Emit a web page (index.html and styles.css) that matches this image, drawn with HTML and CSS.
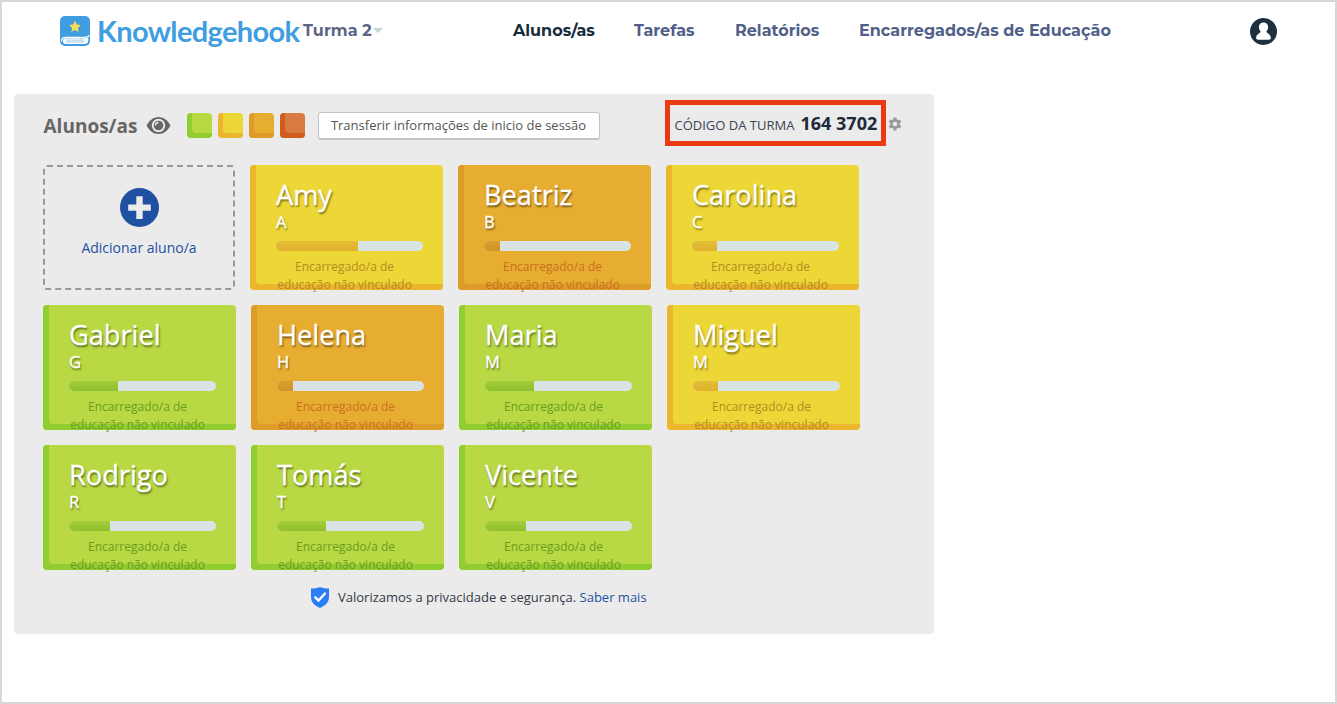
FILE: index.html
```html
<!DOCTYPE html>
<html lang="pt">
<head>
    <meta charset="UTF-8">
    <meta name="viewport" content="width=device-width, initial-scale=1.0">
    <title>Knowledgehook</title>
    <link rel="stylesheet" href="styles.css">
</head>
<body>
    <header class="header">
        <a class="logo">
            <svg class="logo__icon" viewBox="0 0 30 30">
                <rect width="30" height="30" rx="5" fill="#3f9de0"/>
                <path d="M1.500 25.500C1.500 22.500 3 21.300 5.500 21.300H24.500C27 21.300 28.600 20.600 29.300 19.300" fill="none" stroke="#fff" stroke-width="1.300"/>
                <path d="M5.800 22.300H24C26 22.300 27.500 21.800 28.300 21V24C28.300 26.800 27 28 24.500 28H5.800C1.800 28 1.800 22.300 5.800 22.300Z" fill="#fff"/>
                <path d="M6 24.100H24M6 26H24" stroke="#9ccbf0" stroke-width="1"/>
                <path d="M15 4.800l1.800 3.700 4 .6-2.900 2.800.7 4-3.600-1.900-3.600 1.900.7-4-2.900-2.800 4-.6z" fill="#fbdc55"/>
            </svg>
            <span class="logo__text">Knowledgehook</span>
        </a>
        <div class="class-picker">Turma 2<span class="class-picker__caret"></span></div>
        <nav class="nav">
            <a class="nav__link nav__link--students active">Alunos/as</a>
            <a class="nav__link nav__link--tasks">Tarefas</a>
            <a class="nav__link nav__link--reports">Relatórios</a>
            <a class="nav__link nav__link--parents">Encarregados/as de Educação</a>
        </nav>
        <svg class="user" viewBox="0 0 27 27">
            <circle cx="13.500" cy="13.500" r="13.500" fill="#1d3040"/>
            <path d="M13.500 4.500c-3 0-4.800 2.200-4.600 5 .1 1.700.8 3 1.800 4-.3 1.700-4.600 2.700-4.600 6.500 0 1.300.8 1.700 2 1.700h10.800c1.200 0 2-.4 2-1.700 0-3.800-4.300-4.800-4.600-6.500 1-1 1.700-2.300 1.800-4 .2-2.800-1.600-5-4.600-5z" fill="#fff"/>
        </svg>
    </header>

    <main class="panel">
        <div class="toolbar">
            <h1 class="toolbar__title">Alunos/as</h1>
            <svg class="eye" viewBox="0 0 24 17">
                <path d="M0 8.500C2.700 3.500 7 0 12 0s9.300 3.500 12 8.500C21.300 13.500 17 17 12 17S2.700 13.500 0 8.500z" fill="#666"/>
                <circle cx="12" cy="8.500" r="6.700" fill="#ebebeb"/>
                <circle cx="12" cy="8.500" r="4.800" fill="#666"/>
                <path d="M9 8.500a3 3 0 0 1 3-3" fill="none" stroke="#ebebeb" stroke-width="1.400"/>
            </svg>
            <div class="levels">
                <span class="level green"></span>
                <span class="level yellow"></span>
                <span class="level orange"></span>
                <span class="level red"></span>
            </div>
            <button class="download">Transferir informações de inicio de sessão</button>
            <div class="code">
                <span class="code__label">CÓDIGO DA TURMA</span>
                <span class="code__value">164 3702</span>
            </div>
            <svg class="gear" viewBox="0 0 14 14">
                <path d="M7 .5v13M1.400 3.750l11.200 6.500M12.600 3.750l-11.200 6.500" stroke="#999" stroke-width="3"/>
                <circle cx="7" cy="7" r="3.600" fill="#ebebeb" stroke="#999" stroke-width="2.600"/>
            </svg>
        </div>

        <section class="students">
            <a class="add">
                <svg class="add__icon" viewBox="0 0 39 39">
                    <circle cx="19.500" cy="19.500" r="19.500" fill="#1f50a2"/>
                    <path d="M19.500 8.300v22.600M8.200 19.600h22.600" stroke="#ebebeb" stroke-width="6.400"/>
                </svg>
                <span>Adicionar aluno/a</span>
            </a>
            <article class="card yellow">
                <h2 class="card__name">Amy</h2>
                <p class="card__last">A</p>
                <div class="bar"><div class="bar__fill" style="width: 56%"></div></div>
                <p class="card__note">Encarregado/a de educação não vinculado</p>
            </article>
            <article class="card orange">
                <h2 class="card__name">Beatriz</h2>
                <p class="card__last">B</p>
                <div class="bar"><div class="bar__fill" style="width: 11%"></div></div>
                <p class="card__note">Encarregado/a de educação não vinculado</p>
            </article>
            <article class="card yellow">
                <h2 class="card__name">Carolina</h2>
                <p class="card__last">C</p>
                <div class="bar"><div class="bar__fill" style="width: 17%"></div></div>
                <p class="card__note">Encarregado/a de educação não vinculado</p>
            </article>
            <article class="card green">
                <h2 class="card__name">Gabriel</h2>
                <p class="card__last">G</p>
                <div class="bar"><div class="bar__fill" style="width: 33.500%"></div></div>
                <p class="card__note">Encarregado/a de educação não vinculado</p>
            </article>
            <article class="card orange">
                <h2 class="card__name">Helena</h2>
                <p class="card__last">H</p>
                <div class="bar"><div class="bar__fill" style="width: 11%"></div></div>
                <p class="card__note">Encarregado/a de educação não vinculado</p>
            </article>
            <article class="card green">
                <h2 class="card__name">Maria</h2>
                <p class="card__last">M</p>
                <div class="bar"><div class="bar__fill" style="width: 33.500%"></div></div>
                <p class="card__note">Encarregado/a de educação não vinculado</p>
            </article>
            <article class="card yellow">
                <h2 class="card__name">Miguel</h2>
                <p class="card__last">M</p>
                <div class="bar"><div class="bar__fill" style="width: 17%"></div></div>
                <p class="card__note">Encarregado/a de educação não vinculado</p>
            </article>
            <article class="card green">
                <h2 class="card__name">Rodrigo</h2>
                <p class="card__last">R</p>
                <div class="bar"><div class="bar__fill" style="width: 28%"></div></div>
                <p class="card__note">Encarregado/a de educação não vinculado</p>
            </article>
            <article class="card green">
                <h2 class="card__name">Tomás</h2>
                <p class="card__last">T</p>
                <div class="bar"><div class="bar__fill" style="width: 33.500%"></div></div>
                <p class="card__note">Encarregado/a de educação não vinculado</p>
            </article>
            <article class="card green">
                <h2 class="card__name">Vicente</h2>
                <p class="card__last">V</p>
                <div class="bar"><div class="bar__fill" style="width: 28%"></div></div>
                <p class="card__note">Encarregado/a de educação não vinculado</p>
            </article>
        </section>

        <footer class="privacy">
            <svg class="privacy__icon" viewBox="0 0 18 21">
                <path d="M9 0c2.500 1.300 5.500 1.500 9 1.600V10c0 5.500-3.800 8.700-9 11C3.800 18.700 0 15.500 0 10V1.600C3.500 1.500 6.500 1.300 9 0z" fill="#2a7df6"/>
                <path d="M4.300 10.300l3.200 3.200 6.500-7" fill="none" stroke="#fff" stroke-width="2.400" stroke-linecap="round"/>
            </svg>
            <p>Valorizamos a privacidade e segurança. <a class="privacy__link">Saber mais</a></p>
        </footer>
    </main>
</body>
</html>
```

FILE: styles.css
```css
*,
*::after,
*::before {
  box-sizing: border-box;
  margin: 0;
  padding: 0;
}

body {
  background: #fff;
  border: 2px solid #d8d8d8;
  font-family: 'Open Sans', sans-serif;
  height: 704px;
  overflow: hidden;
}

.header {
  align-items: center;
  display: flex;
  font-family: Montserrat, Inter, sans-serif;
  height: 58px;
  padding: 0 58px;
}

.logo {
  align-items: center;
  display: flex;
  flex-shrink: 0;
  gap: 7px;
  width: 243px;
}

.logo__icon {
  flex-shrink: 0;
  height: 30px;
  margin-top: -1px;
  width: 30px;
}

.logo__text {
  color: #3f9de0;
  font-family: Lato, sans-serif;
  font-size: 29px;
  font-weight: 700;
  letter-spacing: -.65px;
  line-height: 36px;
}

.class-picker {
  align-items: center;
  color: #5c6484;
  display: flex;
  flex-shrink: 0;
  font-size: 16px;
  font-weight: 700;
  gap: 1px;
  letter-spacing: .1px;
  margin-top: -2px;
  width: 210px;
  white-space: nowrap;
}

.class-picker__caret {
  border: 5px solid transparent;
  border-bottom: 0;
  border-top-color: #c5d3dc;
}

.nav {
  display: flex;
  flex: 1;
  gap: 40px;
  margin-top: -1px;
}

.nav__link {
  color: #505f88;
  font-size: 16px;
  font-weight: 700;
  white-space: nowrap;
}

.nav__link.active {
  color: #172b3a;
}

.nav__link--students {
  width: 81px;
}

.nav__link--tasks {
  width: 61px;
}

.nav__link--reports {
  width: 84px;
}

.user {
  height: 27px;
  width: 27px;
}

.panel {
  background: #ebebeb;
  border-radius: 4px;
  height: 540px;
  margin: 34px 0 0 11.5px;
  padding: 0 30px;
  width: 920px;
}

.toolbar {
  align-items: center;
  display: flex;
  height: 63px;
}

.toolbar__title {
  color: #666;
  font-size: 19px;
  line-height: 26px;
  width: 102px;
}

.eye {
  height: 17px;
  width: 25px;
}

.levels {
  display: flex;
  gap: 6px;
  margin-left: 16px;
}

.level {
  background: var(--bg);
  border-radius: 4px;
  box-shadow: inset 5px -5px 0 var(--edge);
  height: 25px;
  width: 25px;
}

.green {
  --bg: #b8d943;
  --edge: #90cd31;
  --fill: linear-gradient(#a2ce39, #90bf2e);
  --note: #6b9c1e;
}

.yellow {
  --bg: #ecd736;
  --edge: #ebb62e;
  --fill: linear-gradient(#e3bd35, #dfb12e);
  --note: #b58a22;
}

.orange {
  --bg: #e7ad31;
  --edge: #dd9b28;
  --fill: linear-gradient(#da9f2c, #d09326);
  --note: #cb6f20;
}

.red {
  --bg: #d97a43;
  --edge: #d05d1e;
}

.download {
  background: #fff;
  border: 1px solid #c4c4c4;
  border-bottom-width: 2px;
  border-radius: 3px;
  color: #555;
  font-family: inherit;
  font-size: 13px;
  height: 28px;
  margin-left: 13px;
  white-space: nowrap;
  width: 282px;
}

.code {
  align-items: baseline;
  border: 5px solid #e93a14;
  color: #20283a;
  display: flex;
  height: 46px;
  line-height: 37px;
  margin: -5px 0 0 65px;
  padding-left: 5px;
  white-space: nowrap;
  width: 221px;
}

.code__label {
  color: #3b4353;
  font-size: 13px;
  width: 126px;
}

.code__value {
  font-size: 18px;
  font-weight: 700;
}

.gear {
  height: 14px;
  margin: -4px 0 0 2px;
  width: 14px;
}

.students {
  display: flex;
  flex-wrap: wrap;
  gap: 15px;
  margin: 7.500px 0 0 -.500px;
}

.add {
  align-items: center;
  border: 2px dashed #999;
  border-radius: 4px;
  color: #1f50a2;
  display: flex;
  flex-direction: column;
  font-size: 14px;
  gap: 11px;
  height: 125px;
  line-height: 20px;
  padding-top: 21px;
  width: 192px;
}

.add__icon {
  height: 39px;
  width: 39px;
}

.card {
  background: var(--bg);
  border-radius: 4px;
  box-shadow: inset 6px -6px 0 var(--edge);
  height: 125px;
  padding: 11px 20px 0 26px;
  width: 193px;
}

.card__name,
.card__last {
  color: #fff;
  font-weight: 400;
  text-shadow: 1px 2px 2px rgba(0, 0, 0, .5);
  -webkit-text-stroke: .3px #fff;
}

.card__name {
  font-size: 27.200px;
  line-height: 37px;
}

.card__last {
  font-size: 16.500px;
  line-height: 18px;
}

.bar {
  background: #dae3e3;
  border-radius: 5px;
  height: 10px;
  margin-top: 10px;
  overflow: hidden;
}

.bar__fill {
  background: var(--fill);
  height: 100%;
}

.card__note {
  color: var(--note);
  font-size: 12px;
  line-height: 18px;
  margin-top: 7px;
  padding-right: 10px;
  text-align: center;
}

.privacy {
  align-items: center;
  color: #333a48;
  display: flex;
  font-size: 13px;
  gap: 9px;
  margin: 17px 0 0 267.500px;
}

.privacy__icon {
  height: 21px;
  width: 18px;
}

.privacy__link {
  color: #1f50a2;
}
```
